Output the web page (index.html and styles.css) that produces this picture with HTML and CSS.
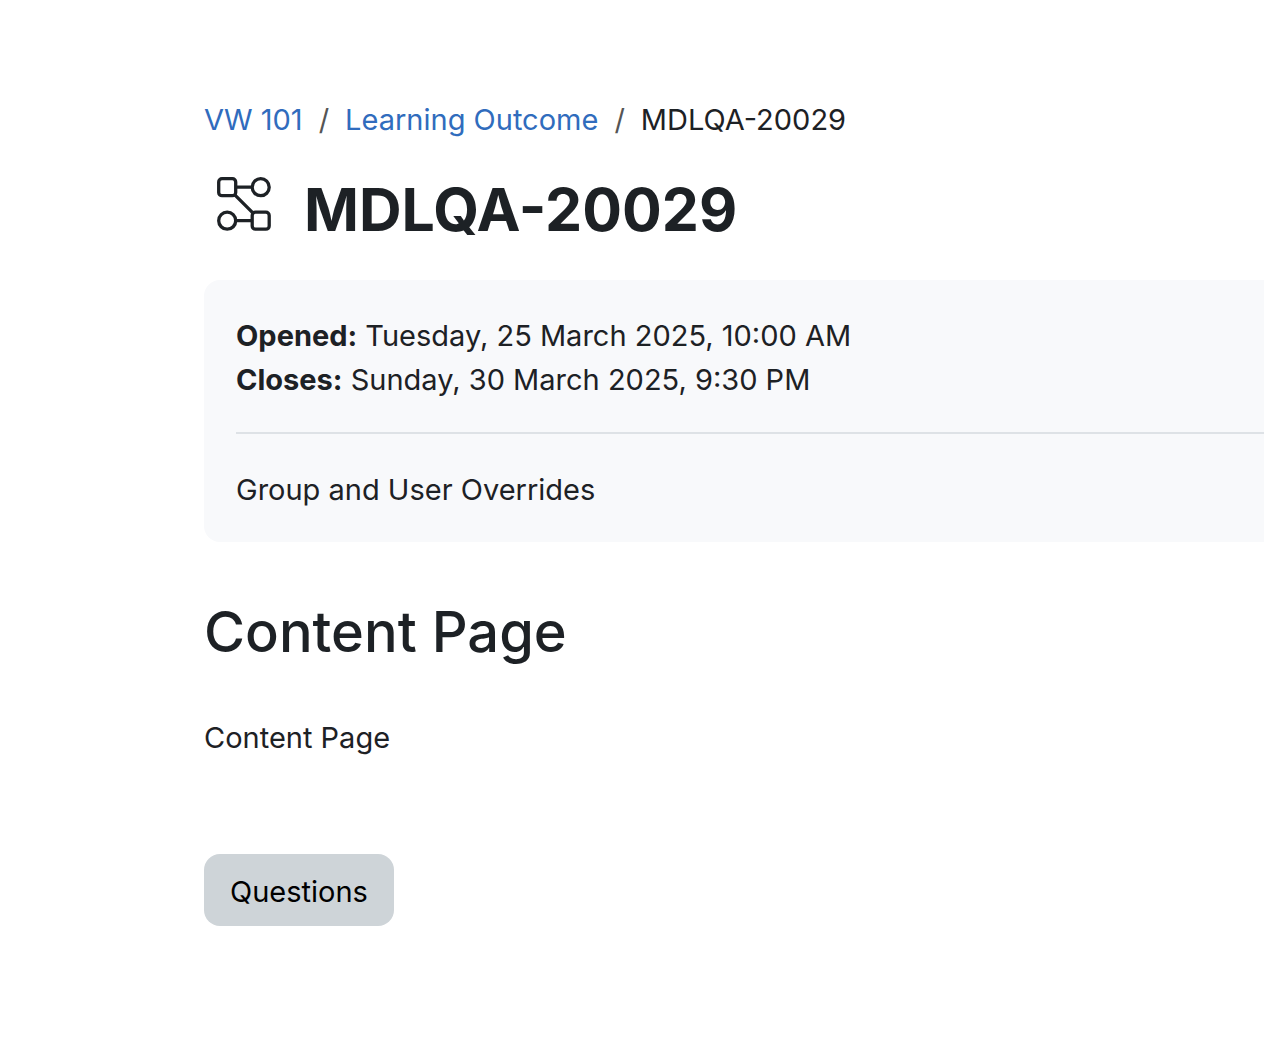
FILE: index.html
```html
<!DOCTYPE html>
<html lang="en">
<head>
  <meta charset="UTF-8">
  <meta name="viewport" content="width=device-width,initial-scale=1.0">
  <title>MDLQA-20029</title>
  <link rel="stylesheet" href="styles.css">
</head>
<body>
  <header class="page-header">
    <nav aria-label="Breadcrumb">
      <ol class="breadcrumb">
        <li><a href="#">VW 101</a></li>
        <li><a href="#">Learning Outcome</a></li>
        <li>MDLQA-20029</li>
      </ol>
    </nav>
    <div class="page-title">
      <svg class="activity-icon" viewBox="0 0 56 56" fill="none" stroke="currentColor" stroke-width="3.3" aria-hidden="true">
        <rect x="2.700" y="2.700" width="17" height="17" rx="3.300"/>
        <circle cx="44.700" cy="11.200" r="8.500"/>
        <circle cx="11.200" cy="44.700" r="8.500"/>
        <rect x="36.200" y="36.200" width="17" height="17" rx="3.300"/>
        <path d="M19.700 11.200h16.500M18.800 18.800l18.300 18.300M19.700 44.700h16.500"/>
      </svg>
      <h1>MDLQA-20029</h1>
    </div>
  </header>

  <main>
    <section class="activity-info">
      <div class="dates">
        <div><strong>Opened:</strong> Tuesday, 25 March 2025, 10:00 AM</div>
        <div><strong>Closes:</strong> Sunday, 30 March 2025, 9:30 PM</div>
      </div>
      <p class="description">Group and User Overrides</p>
    </section>

    <h2>Content Page</h2>
    <p class="contents">Content Page</p>
    <button type="button" class="btn">Questions</button>
  </main>
</body>
</html>
```

FILE: styles.css
```css
:root {
  --fg: #1d2125;
  --link: #306cbd;
  --panel: #f8f9fb;
  --border: #dee2e6;
  --button: #ced4d8;
}
body {
  margin: 0;
  padding: 98px 0 0 204px;
  font-family: Inter, "Liberation Sans", sans-serif;
  font-size: 29px;
  line-height: 44px;
  color: var(--fg);
  background: #fff;
}
a { color: var(--link); text-decoration: none; }
h1, h2, p { margin: 0; }

/* Breadcrumb and title */
.breadcrumb {
  display: flex;
  margin: 0; padding: 0;
  list-style: none;
}
.breadcrumb li + li::before {
  content: "/";
  padding: 0 16px;
  color: #555;
}
.page-title {
  display: flex; align-items: center;
  gap: 32px;
  padding: 29px 0 31px 12px;
}
.activity-icon { width: 56px; height: 56px; margin-bottom: 12px; }
h1 { font-size: 59px; line-height: 78px; font-weight: 700; }

/* Dates and description */
.activity-info {
  padding: 34px 0 30px 32px;
  background: var(--panel);
  border-radius: 16px 0 0 16px;
}
.dates {
  padding-bottom: 30px;
  border-bottom: 2px solid var(--border);
}
.description { padding-top: 34px; }

/* Page contents */
h2 {
  margin-top: 54px;
  font-size: 56px; line-height: 72px; font-weight: 500;
}
.contents { margin-top: 48px; }
.btn {
  margin-top: 94px;
  padding: 16px 26px 12px;
  font: inherit;
  color: #000;
  background: var(--button);
  border: 0; border-radius: 16px;
  cursor: pointer;
}
```
